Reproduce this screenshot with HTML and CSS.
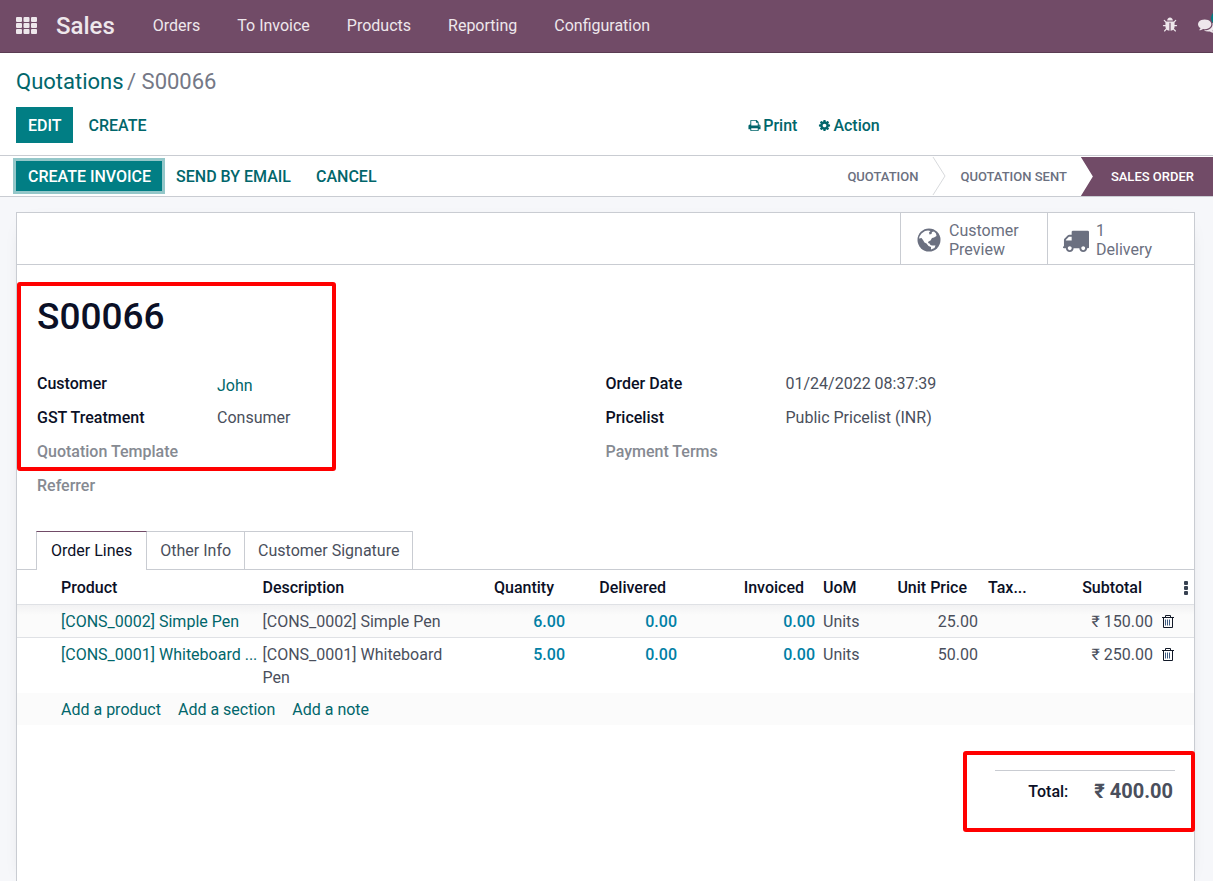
FILE: index.html
```html
<!DOCTYPE html>
<html lang="en">
<head>
<meta charset="utf-8">
<title>S00066 - Sales</title>
<link rel="stylesheet" href="styles.css">
</head>
<body>
<header class="navbar">
  <button class="apps" aria-label="Applications">
    <svg width="21" height="17" viewBox="0 0 21 17" fill="currentColor"><rect width="6" height="5" rx="1"/><rect x="7.500" width="6" height="5" rx="1"/><rect x="15" width="6" height="5" rx="1"/><rect y="6" width="6" height="5" rx="1"/><rect x="7.500" y="6" width="6" height="5" rx="1"/><rect x="15" y="6" width="6" height="5" rx="1"/><rect y="12" width="6" height="5" rx="1"/><rect x="7.500" y="12" width="6" height="5" rx="1"/><rect x="15" y="12" width="6" height="5" rx="1"/></svg>
  </button>
  <a class="brand" href="#">Sales</a>
  <nav class="menu">
    <a href="#">Orders</a>
    <a href="#">To Invoice</a>
    <a href="#">Products</a>
    <a href="#">Reporting</a>
    <a href="#">Configuration</a>
  </nav>
  <div class="systray">
    <button aria-label="Debug"><svg width="16" height="16" viewBox="0 0 1792 1792" fill="currentColor"><path d="M1696 960q0 26-19 45t-45 19h-224q0 171-67 290l208 209q19 19 19 45t-19 45q-18 19-45 19t-45-19l-198-197q-5 5-15 13t-42 28.500-65 36.500-82 29-97 13v-896h-128v896q-51 0-101.500-13.500t-87-33-66-39-43.500-32.500l-15-14-183 207q-20 21-48 21-24 0-43-16-19-18-20.500-44.500t15.500-46.500l202-227q-58-114-58-274h-224q-26 0-45-19t-19-45 19-45 45-19h224v-294l-173-173q-19-19-19-45t19-45 45-19 45 19l173 173h844l173-173q19-19 45-19t45 19 19 45-19 45l-173 173v294h224q26 0 45 19t19 45zm-480-576h-640q0-133 93.500-226.500t226.500-93.500 226.500 93.500 93.500 226.500z"/></svg></button>
    <button class="chat" aria-label="Messages"><svg width="17" height="17" viewBox="0 0 1792 1792" fill="currentColor"><path d="M1408 768q0 139-94 257t-256.500 186.500-353.500 68.500q-86 0-176-16-124 88-278 128-36 9-86 16h-3q-11 0-20.500-8t-11.500-21q-1-3-1-6.500t.5-6.500 2-6l2.500-5 3.500-5.500 4-5 4.500-5 4-4.500q5-6 23-25t26-29.500 22.500-29 25-38.500 20.500-44q-124-72-195-177t-71-224q0-139 94-257t256.500-186.500 353.500-68.500 353.500 68.500 256.500 186.500 94 257zm384 256q0 120-71 224.500t-195 176.500q10 24 20.500 44t25 38.500 22.500 29 26 29.500 23 25q1 1 4 4.500t4.500 5 4 5 3.500 5.500l2.500 5 2 6 .5 6.500-1 6.500q-3 14-13 22t-22 7q-50-7-86-16-154-40-278-128-90 16-176 16-271 0-472-132 58 4 88 4 161 0 309-45t264-129q125-92 192-212t67-254q0-77-23-152 129 71 204 178t75 230z"/></svg><span class="badge"></span></button>
  </div>
</header>

<section class="control">
  <div class="crumbs"><a href="#">Quotations</a> <span>/ S00066</span></div>
  <div class="control-row">
    <div class="buttons">
      <button class="btn primary">EDIT</button>
      <button class="btn">CREATE</button>
    </div>
    <div class="actions">
      <button class="action"><svg width="13" height="13" viewBox="0 0 1792 1792" fill="currentColor"><path d="M448 1536h896v-256h-896v256zm0-640h896v-384h-160q-40 0-68-28t-28-68v-160h-640v640zm1152 64q0-26-19-45t-45-19-45 19-19 45 19 45 45 19 45-19 19-45zm128 0v416q0 13-9.500 22.500t-22.500 9.500h-224v160q0 40-28 68t-68 28h-960q-40 0-68-28t-28-68v-160h-224q-13 0-22.500-9.500t-9.500-22.500v-416q0-79 56.500-135.500t135.500-56.500h64v-544q0-40 28-68t68-28h672q40 0 88 20t76 48l152 152q28 28 48 76t20 88v256h64q79 0 135.500 56.500t56.500 135.500z"/></svg>Print</button>
      <button class="action"><svg width="13" height="13" viewBox="0 0 1792 1792" fill="currentColor"><path d="M1152 896q0-106-75-181t-181-75-181 75-75 181 75 181 181 75 181-75 75-181zm512-109v222q0 12-8 23t-20 13l-185 28q-19 54-39 91 35 50 107 138 10 12 10 25t-9 23q-27 37-99 108t-94 71q-12 0-26-9l-138-108q-44 23-91 38-16 136-29 186-7 28-36 28h-222q-14 0-24.500-8.500t-11.500-21.500l-28-184q-49-16-90-37l-141 107q-10 9-25 9-14 0-25-11-126-114-165-168-7-10-7-23 0-12 8-23 15-21 51-66.500t54-70.500q-27-50-41-99l-183-27q-13-2-21-12.500t-8-23.500v-222q0-12 8-23t19-13l186-28q14-46 39-92-40-57-107-138-10-12-10-24 0-10 9-23 26-36 98.500-107.500t94.500-71.500q13 0 26 10l138 107q44-23 91-38 16-136 29-186 7-28 36-28h222q14 0 24.500 8.500t11.500 21.500l28 184q49 16 90 37l142-107q9-9 24-9 13 0 25 10 129 119 165 170 7 8 7 22 0 12-8 23-15 21-51 66.500t-54 70.500q26 50 41 98l183 28q13 2 21 12.500t8 23.500z"/></svg>Action</button>
    </div>
  </div>
</section>

<section class="statusbar">
  <div class="status-buttons">
    <button class="btn small primary focused">CREATE INVOICE</button>
    <button class="btn small">SEND BY EMAIL</button>
    <button class="btn small">CANCEL</button>
  </div>
  <div class="stages">
    <button class="stage">QUOTATION</button>
    <svg class="chevron" width="14" height="40" viewBox="0 0 14 40" fill="none" stroke="#d8dadd"><path d="M1 1L13 20L1 39"/></svg>
    <button class="stage">QUOTATION SENT</button>
    <button class="stage current">SALES ORDER</button>
  </div>
</section>

<main class="page">
  <article class="sheet">
    <div class="stats">
      <button class="stat">
        <svg width="26" height="24" viewBox="-1 0 26 24"><circle cx="12" cy="12" r="11.500" fill="#6b7080"/><path fill="#fff" d="M2.500 8.500L4.500 5.500L8 3L11 2.500L13.500 3L12 4.500L12.500 6.500L14.500 6L15 4L17 3.500L19 5.500L19.500 8L17 9.500L15 10L13.500 12.500L11.500 13.500L11 15L12.500 15.500L13.500 17L15 17.500L18.500 17.500L17.500 20L14 21.500L14 19L11.500 18L9.500 15.500L7.500 14.500L6 12L4.500 10L2 10.500Z"/></svg>
        <span>Customer<br>Preview</span>
      </button>
      <button class="stat">
        <svg width="26" height="27" viewBox="64 0 1728 1792" fill="#6b7080"><path d="M640 1408q0-52-38-90t-90-38-90 38-38 90 38 90 90 38 90-38 38-90zm-384-512h384v-256h-158q-13 0-22 9l-195 195q-9 9-9 22v30zm1280 512q0-52-38-90t-90-38-90 38-38 90 38 90 90 38 90-38 38-90zm256-1088v1024q0 15-4 26.500t-13.500 18.500-16.500 11.500-23.500 6-22.500 2-25.500 0-22.500-.5q0 106-75 181t-181 75-181-75-75-181h-384q0 106-75 181t-181 75-181-75-75-181h-64q-3 0-22.500.5t-25.500 0-22.500-2-23.500-6-16.500-11.500-13.500-18.500-4-26.500q0-26 19-45t45-19v-320q0-8-.5-35t0-38 2.500-34.500 6.500-37 14-30.500 22.500-30l198-198q19-19 50.500-32t58.500-13h160v-192q0-26 19-45t45-19h1024q26 0 45 19t19 45z"/></svg>
        <span>1<br>Delivery</span>
      </button>
    </div>

    <div class="mark mark-head"></div>
    <h1 class="title">S00066</h1>
    <div class="fields">
      <dl class="group">
        <dt>Customer</dt><dd class="linked"><a href="#">John</a></dd>
        <dt>GST Treatment</dt><dd>Consumer</dd>
        <dt class="empty">Quotation Template</dt><dd></dd>
        <dt class="empty">Referrer</dt><dd></dd>
      </dl>
      <dl class="group">
        <dt>Order Date</dt><dd>01/24/2022 08:37:39</dd>
        <dt>Pricelist</dt><dd>Public Pricelist (INR)</dd>
        <dt class="empty">Payment Terms</dt><dd></dd>
      </dl>
    </div>

    <div class="tabs">
      <button class="tab active">Order Lines</button>
      <button class="tab">Other Info</button>
      <button class="tab">Customer Signature</button>
    </div>

    <table class="lines">
      <colgroup><col class="c-handle"><col><col><col class="c-qty"><col class="c-delivered"><col class="c-invoiced"><col class="c-uom"><col class="c-price"><col class="c-tax"><col class="c-subtotal"><col class="c-trash"><col class="c-more"></colgroup>
      <thead>
        <tr><th></th><th>Product</th><th>Description</th><th class="num">Quantity</th><th class="num">Delivered</th><th class="num">Invoiced</th><th>UoM</th><th class="num">Unit Price</th><th class="tax">Tax...</th><th class="num">Subtotal</th><th></th><th class="more"><button class="icon" aria-label="Optional columns"><svg width="4" height="14" viewBox="0 0 4 14" fill="#374151"><rect width="4" height="4" rx="1"/><rect y="5" width="4" height="4" rx="1"/><rect y="10" width="4" height="4" rx="1"/></svg></button></th></tr>
      </thead>
      <tbody>
        <tr class="first"><td></td><td class="product"><a href="#">[CONS_0002] Simple Pen</a></td><td>[CONS_0002] Simple Pen</td><td class="num qty">6.00</td><td class="num qty">0.00</td><td class="num qty">0.00</td><td>Units</td><td class="num">25.00</td><td></td><td class="num">₹ 150.00</td><td class="trash"><button class="icon" aria-label="Delete line"><svg width="12" height="13" viewBox="0 0 12 13" fill="none" stroke="#111827"><path d="M0 2.500H12M3.500 2.500V.5H8.500V2.500M1.500 2.500V12.500H10.500V2.500"/><path stroke="#3c5a80" d="M3.500 4.500V10.500M5.500 4.500V10.500M7.500 4.500V10.500"/></svg></button></td><td></td></tr>
        <tr><td></td><td class="product"><a href="#">[CONS_0001] Whiteboard ...</a></td><td>[CONS_0001] Whiteboard Pen</td><td class="num qty">5.00</td><td class="num qty">0.00</td><td class="num qty">0.00</td><td>Units</td><td class="num">50.00</td><td></td><td class="num">₹ 250.00</td><td class="trash"><button class="icon" aria-label="Delete line"><svg width="12" height="13" viewBox="0 0 12 13" fill="none" stroke="#111827"><path d="M0 2.500H12M3.500 2.500V.5H8.500V2.500M1.500 2.500V12.500H10.500V2.500"/><path stroke="#3c5a80" d="M3.500 4.500V10.500M5.500 4.500V10.500M7.500 4.500V10.500"/></svg></button></td><td></td></tr>
        <tr class="adders"><td></td><td colspan="11"><div class="add-links"><a href="#">Add a product</a><a href="#">Add a section</a><a href="#">Add a note</a></div></td></tr>
      </tbody>
    </table>

    <div class="totals">
      <div class="mark mark-total"></div>
      <span class="total-label">Total:</span><strong class="total-amount">₹ 400.00</strong>
    </div>
  </article>
</main>
</body>
</html>
```
FILE: styles.css
```css
* { box-sizing: border-box; }
html { height: 100%; }
body {
  margin: 0;
  min-height: 100%;
  display: flex;
  flex-direction: column;
  overflow-x: hidden;
  background: #fff;
  color: #4a4f5c;
  font: 16px/23px Roboto, "Liberation Sans", sans-serif;
}
a { color: #01666b; text-decoration: none; }
button { margin: 0; padding: 0; border: 0; background: none; font: inherit; color: inherit; cursor: pointer; }
svg { display: block; flex: none; }

.navbar {
  display: flex;
  align-items: center;
  height: 53px;
  padding: 0 0 2px 16px;
  background: #714b67;
  border-bottom: 1px solid #5a3c52;
  color: #eee7ec;
}
.navbar a { color: inherit; }
.brand { margin: 0 38px 0 19px; padding-top: 2px; font-size: 24px; font-weight: 500; line-height: 32px; }
.menu { display: flex; gap: 37px; }
.systray { display: flex; gap: 20px; margin-left: auto; margin-right: -2px; }
.chat { position: relative; }
.badge { position: absolute; top: -6px; left: 13px; width: 14px; height: 14px; border-radius: 7px; background: #017e84; }

.control { padding: 16px 16px 12px; border-bottom: 1px solid #c9ccd2; }
.crumbs { font-size: 22px; line-height: 26px; color: #747886; }
.crumbs span { margin-left: -2px; }
.control-row { display: grid; grid-template-columns: 62fr 38fr; margin-top: 12px; align-items: center; }
.buttons { display: flex; gap: 4px; }
.btn { height: 36px; padding: 0 11px 0 12px; font-weight: 500; color: #01666b; white-space: nowrap; }
.btn.small { height: 30px; }
.btn.primary { background: #017e84; color: #fff; }
.btn.focused { box-shadow: 0 0 0 3px #94c7c9; }
.actions { display: flex; gap: 21px; }
.action { display: flex; align-items: center; gap: 2px; font-weight: 500; color: #01666b; }

.statusbar { display: flex; justify-content: space-between; height: 41px; padding-left: 16px; border-bottom: 1px solid #c9ccd2; }
.status-buttons { display: flex; gap: 2px; align-items: center; }
.stages { display: flex; }
.stage { padding: 0 14px; font-size: 13px; font-weight: 500; color: #6b7080; }
.stage.current { padding: 0 19px 0 30px; margin-top: 1px; background: #714b67; color: #fff; clip-path: polygon(0 0, 100% 0, 100% 100%, 0 100%, 12px 50%); }

.page { flex: 1; display: flex; padding: 15px 18px 0 16px; background: #f6f7fa; }
.sheet { position: relative; flex: 1; min-width: 0; background: #fff; border: 1px solid #c9ccd2; border-bottom: 0; box-shadow: 0 5px 20px -15px #0006; }
.stats { display: flex; justify-content: flex-end; height: 52px; border-bottom: 1px solid #c9ccd2; }
.stat { display: flex; align-items: center; gap: 7px; width: 147px; padding: 3px 15px 0; border-left: 1px solid #c9ccd2; color: #6b7080; line-height: 19px; text-align: left; }

.title { margin: 28px 20px 31px; font-size: 37px; line-height: 48px; font-weight: 500; color: #0b1026; }
.fields { display: grid; grid-template-columns: 1fr 1fr; padding: 0 20px; }
.group { display: grid; grid-template-columns: 180px 1fr; grid-auto-rows: 23px; row-gap: 11px; margin: 0; align-content: start; }
.group dt { font-weight: 500; color: #0b1026; }
.group dt.empty { color: #868a92; }
.group dd { margin: 0; }
.group dd.linked { padding-top: 2px; }

.tabs { display: flex; margin-top: 34px; padding-left: 19px; border-bottom: 1px solid #c9ccd2; }
.tab { height: 38px; padding: 0 13px; border: 1px solid #c9ccd2; border-width: 1px 1px 0 0; }
.tab.active { height: 39px; margin-bottom: -1px; padding: 0 14px 1px; border-left-width: 1px; border-top-color: #714b67; background: #fff; color: #0b1026; }

.lines { width: 100%; table-layout: fixed; border-collapse: collapse; }
.lines th, .lines td { padding: 5px 4px 4px; text-align: left; vertical-align: top; font-weight: 400; white-space: nowrap; }
.lines td:nth-child(3) { white-space: normal; }
.lines th { padding: 6px 4px 5px; font-weight: 500; color: #0b1026; }
.lines thead tr, .lines .first { border-bottom: 1px solid #dfe1e5; }
.lines .first { background: linear-gradient(#f2f2f3, #fbfbfb 10px); }
.lines .adders { background: #fbfbfb; }
.lines .num { text-align: right; }
.lines th.num { padding-right: 15px; }
.lines .qty { color: #0180a5; font-weight: 500; }
.lines .tax { padding-left: 6px; }
.lines .trash { padding: 10px 4px 0 5px; }
.lines .more { padding: 11px 4px 0 5px; }
.icon { display: block; }
.c-handle { width: 40px; }
.c-qty { width: 109px; }
.c-delivered { width: 112px; }
.c-invoiced { width: 138px; }
.c-uom { width: 46px; }
.c-price { width: 117px; }
.c-tax { width: 51px; }
.c-subtotal { width: 124px; }
.c-trash { width: 22px; }
.c-more { width: 15px; }
.add-links { display: flex; gap: 17px; }

.totals { position: relative; display: flex; align-items: center; justify-content: flex-end; gap: 26px; width: 180px; margin: 45px 19px 40px auto; padding: 5px 2px 0 0; border-top: 1px solid #c9ccd2; }
.total-label { font-weight: 500; color: #0b1026; }
.total-amount { font-size: 20px; line-height: 30px; font-weight: 700; }
.mark { position: absolute; border: 4px solid #f00; border-radius: 3px; pointer-events: none; }
.mark-head { top: 69px; left: 0; width: 319px; height: 189px; }
.mark-total { top: -20px; right: -20px; width: 232px; height: 81px; }
```
